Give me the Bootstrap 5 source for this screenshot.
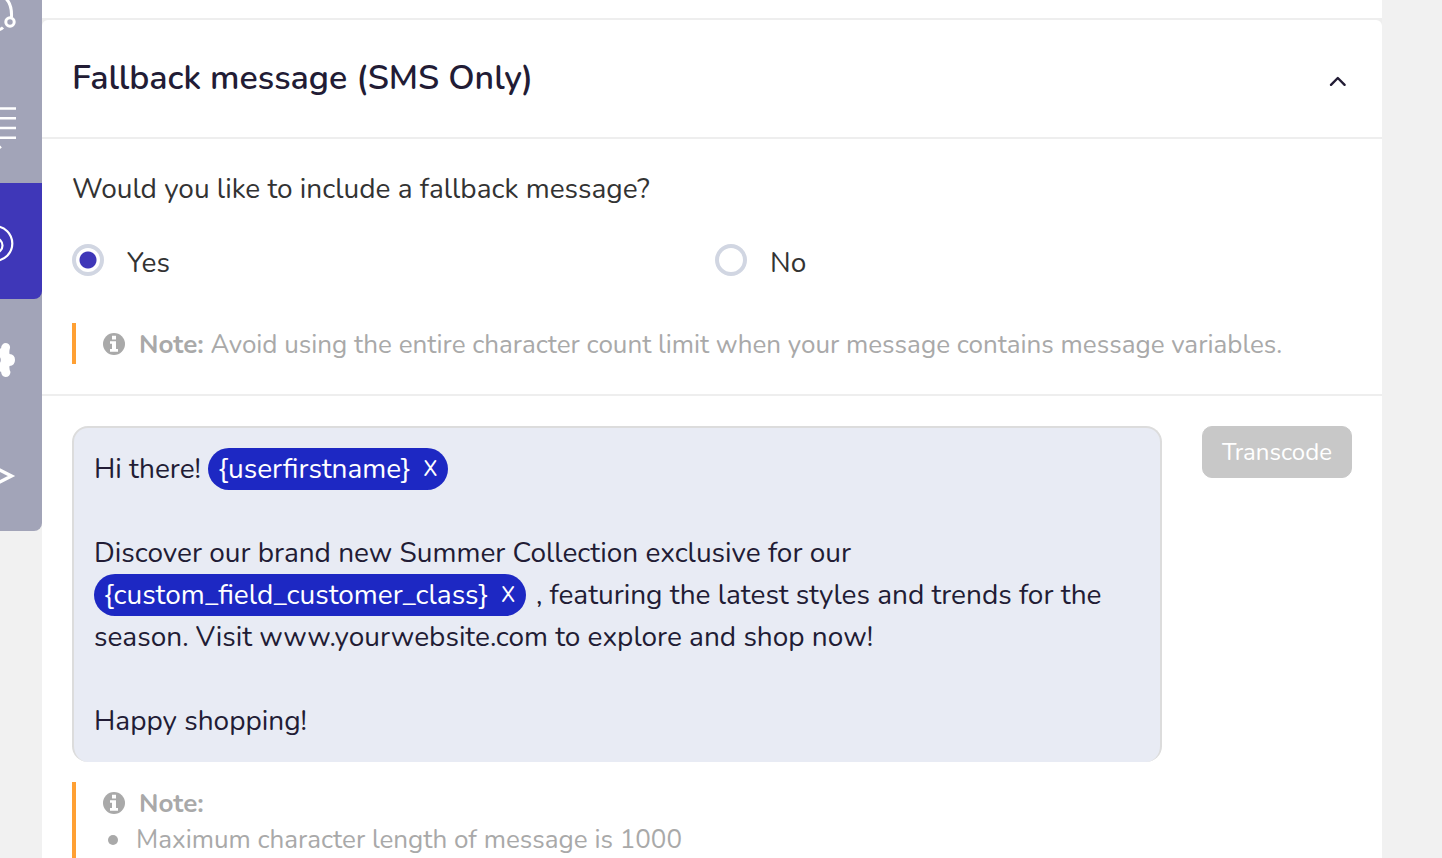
<!DOCTYPE html>
<html lang="en">
<head>
<meta charset="utf-8">
<meta name="viewport" content="width=device-width, initial-scale=1">
<title>Fallback message</title>
<link href="https://cdn.jsdelivr.net/npm/bootstrap@5.3.0/dist/css/bootstrap.min.css" rel="stylesheet">
<style>
  :root { --ink: #221c35; --line: #eeeeee; --brand: #3f37b8; --muted: #a9a9a9; }
  body { font-family: Nunito, Lato, sans-serif; font-size: 28px; line-height: 42px; color: var(--ink); background: #f1f1f1; }
  .rail { width: 42px; background: #a2a4b8; border-bottom-right-radius: 8px; }
  .rail a { height: 116px; color: #fff; }
  .rail a:first-child { height: 67px; }
  .rail a.active { background: var(--brand); border-bottom-right-radius: 8px; }
  .page-body { margin-right: 60px; }
  .previous-panel { height: 18px; }
  .panel-wrap { background: var(--line); padding-top: 2px; }
  .panel { border-radius: 6px 6px 0 0; }
  .panel-head { padding: 37px 30px 38px; border-bottom: 2px solid var(--line); }
  .panel-head h2 { font-size: 34px; line-height: 42px; font-weight: 600; }
  .toggle { color: var(--ink); }
  .section-block { padding: 30px; }
  .section-line { border-bottom: 2px solid var(--line); }
  .question { font-size: 28px; line-height: 40px; color: #333; margin-bottom: 33px; }
  .choices { display: grid; grid-template-columns: 1fr 1fr; gap: 6px; color: #333; margin-bottom: 39px; }
  .choices .form-check-input { width: 32px; height: 32px; margin: 2px 23px 0 0; border: 4px solid #d1d6e2; }
  .choices .form-check-input:checked { background-color: #fff; background-image: radial-gradient(circle, var(--brand) 8px, #fff 9px); background-size: 100% 100%; }
  .hint { border-left: 4px solid #ffa033; padding: 4px 0 1px 27px; color: var(--muted); font-size: 26px; line-height: 36px; }
  .hint svg { margin: 0 14px 2px 0; }
  .hint li { display: flex; align-items: center; gap: 18px; padding-left: 5px; }
  .hint li::before { content: ""; width: 10px; height: 10px; border-radius: 50%; background: currentColor; }
  .composer { gap: 40px; margin-bottom: 20px; }
  .editor { background: #e8ebf4; border: 2px solid #dcdcdc; border-bottom: 0; border-radius: 16px; padding: 20px; }
  .token { background: #1d28c3; border-radius: 21px; padding: 0 10px; margin-right: 3px; color: #fff; }
  .token button { width: 15px; margin-left: 5px; font-size: 21px; font-weight: 500; line-height: 42px; vertical-align: top; }
  .btn-transcode { --bs-btn-disabled-bg: #c8c8c8; --bs-btn-disabled-border-color: #c8c8c8; --bs-btn-disabled-color: #fff; --bs-btn-disabled-opacity: 1; width: 150px; height: 52px; font-size: 24px; line-height: 36px; border-radius: 10px; }
</style>
</head>
<body>
<div class="vh-100 overflow-hidden d-flex align-items-start">
  <nav class="rail flex-shrink-0 d-flex flex-column" aria-label="Main">
    <a href="#" aria-label="Journeys" class="d-block">
      <svg class="d-block" width="42" height="67" fill="none" stroke="currentColor" stroke-width="3"><path d="M-2-6C8-3 12 6 11.500 17M-2 30Q1 29.500 3 27.500"/><circle cx="10" cy="22" r="4.200"/></svg>
    </a>
    <a href="#" aria-label="Messages" class="d-block">
      <svg class="d-block" width="42" height="116" fill="none" stroke="currentColor" stroke-width="2.600"><path d="M0 41.500H16M0 51.300H16M0 61H16M0 70.800H16M-2 82L1 79.500"/></svg>
    </a>
    <a href="#" aria-label="Campaigns" class="active d-block" aria-current="page">
      <svg class="d-block" width="42" height="116" fill="none" stroke="currentColor" stroke-width="2.200"><circle cx="-5" cy="60.500" r="17.300"/><circle cx="-5" cy="62.500" r="7.500"/></svg>
    </a>
    <a href="#" aria-label="Settings" class="d-block">
      <svg class="d-block" width="42" height="116" fill="currentColor"><path d="M-3 49L1 49.500Q1.500 44 6 44Q10.500 45 10 49Q9 52 9.500 55Q15 55.500 15 61Q15 66.500 9.500 67Q9 70 10.500 73Q10 78 5.500 78Q1.500 77.500 1 72.500L-3 73Z"/><circle cx="-4" cy="61" r="4.800" fill="#a2a4b8"/></svg>
    </a>
    <a href="#" aria-label="Expand" class="d-block">
      <svg class="d-block" width="42" height="116" fill="none" stroke="currentColor" stroke-width="3.400"><path d="M-3 53.500L11.500 61L-3 68.500"/></svg>
    </a>
  </nav>

  <main class="page-body flex-grow-1">
    <div class="previous-panel bg-white"></div>
    <div class="panel-wrap">
      <section class="panel bg-white">
        <header class="panel-head d-flex justify-content-between align-items-center">
          <h2 class="m-0">Fallback message (SMS Only)</h2>
          <button type="button" class="toggle btn border-0 p-0 lh-1" aria-label="Collapse section" aria-expanded="true">
            <svg class="d-block" width="28" height="22" viewBox="0 0 28 22" fill="none" stroke="currentColor" stroke-width="2.400" stroke-linecap="round" stroke-linejoin="round"><path d="M7 17.800L13.800 11L20.600 17.800"/></svg>
          </button>
        </header>

        <div class="section-block section-line">
          <fieldset>
            <legend class="question">Would you like to include a fallback message?</legend>
            <div class="choices">
              <div class="d-flex align-items-start">
                <input class="form-check-input" type="radio" name="fallback" id="fallback-yes" checked>
                <label for="fallback-yes">Yes</label>
              </div>
              <div class="d-flex align-items-start">
                <input class="form-check-input" type="radio" name="fallback" id="fallback-no">
                <label for="fallback-no">No</label>
              </div>
            </div>
          </fieldset>
          <div class="hint">
            <div class="d-flex align-items-center">
              <svg class="flex-shrink-0" width="22" height="22" viewBox="0 0 22 22"><circle cx="11" cy="11" r="11" fill="currentColor"/><path d="M9 2.800h4v3.700H9zM7 8.200h6V16h2v2.800H7V16h2v-5.200H7z" fill="#fff"/></svg>
              <span><b>Note:</b> Avoid using the entire character count limit when your message contains message variables.</span>
            </div>
          </div>
        </div>

        <div class="section-block">
          <div class="composer d-flex align-items-start">
            <div class="editor flex-grow-1" role="textbox" aria-multiline="true" aria-label="Fallback message" contenteditable="true" spellcheck="false">
              <div>Hi there! <span class="token d-inline-block" contenteditable="false">{userfirstname} <button type="button" class="bg-transparent border-0 p-0 text-white text-uppercase" aria-label="Remove userfirstname">x</button></span></div>
              <div><br></div>
              <div>Discover our brand new Summer Collection exclusive for our <span class="token d-inline-block" contenteditable="false">{custom_field_customer_class} <button type="button" class="bg-transparent border-0 p-0 text-white text-uppercase" aria-label="Remove custom_field_customer_class">x</button></span> , featuring the latest styles and trends for the season. Visit www.yourwebsite.com to explore and shop now!</div>
              <div><br></div>
              <div>Happy shopping!</div>
            </div>
            <button type="button" class="btn btn-transcode flex-shrink-0 p-0" disabled>Transcode</button>
          </div>
          <div class="hint">
            <div class="d-flex align-items-center">
              <svg class="flex-shrink-0" width="22" height="22" viewBox="0 0 22 22"><circle cx="11" cy="11" r="11" fill="currentColor"/><path d="M9 2.800h4v3.700H9zM7 8.200h6V16h2v2.800H7V16h2v-5.200H7z" fill="#fff"/></svg>
              <b>Note:</b>
            </div>
            <ul class="list-unstyled mb-0">
              <li>Maximum character length of message is 1000</li>
            </ul>
          </div>
        </div>
      </section>
    </div>
  </main>
</div>
<script src="https://cdn.jsdelivr.net/npm/bootstrap@5.3.0/dist/js/bootstrap.bundle.min.js"></script>
</body>
</html>
